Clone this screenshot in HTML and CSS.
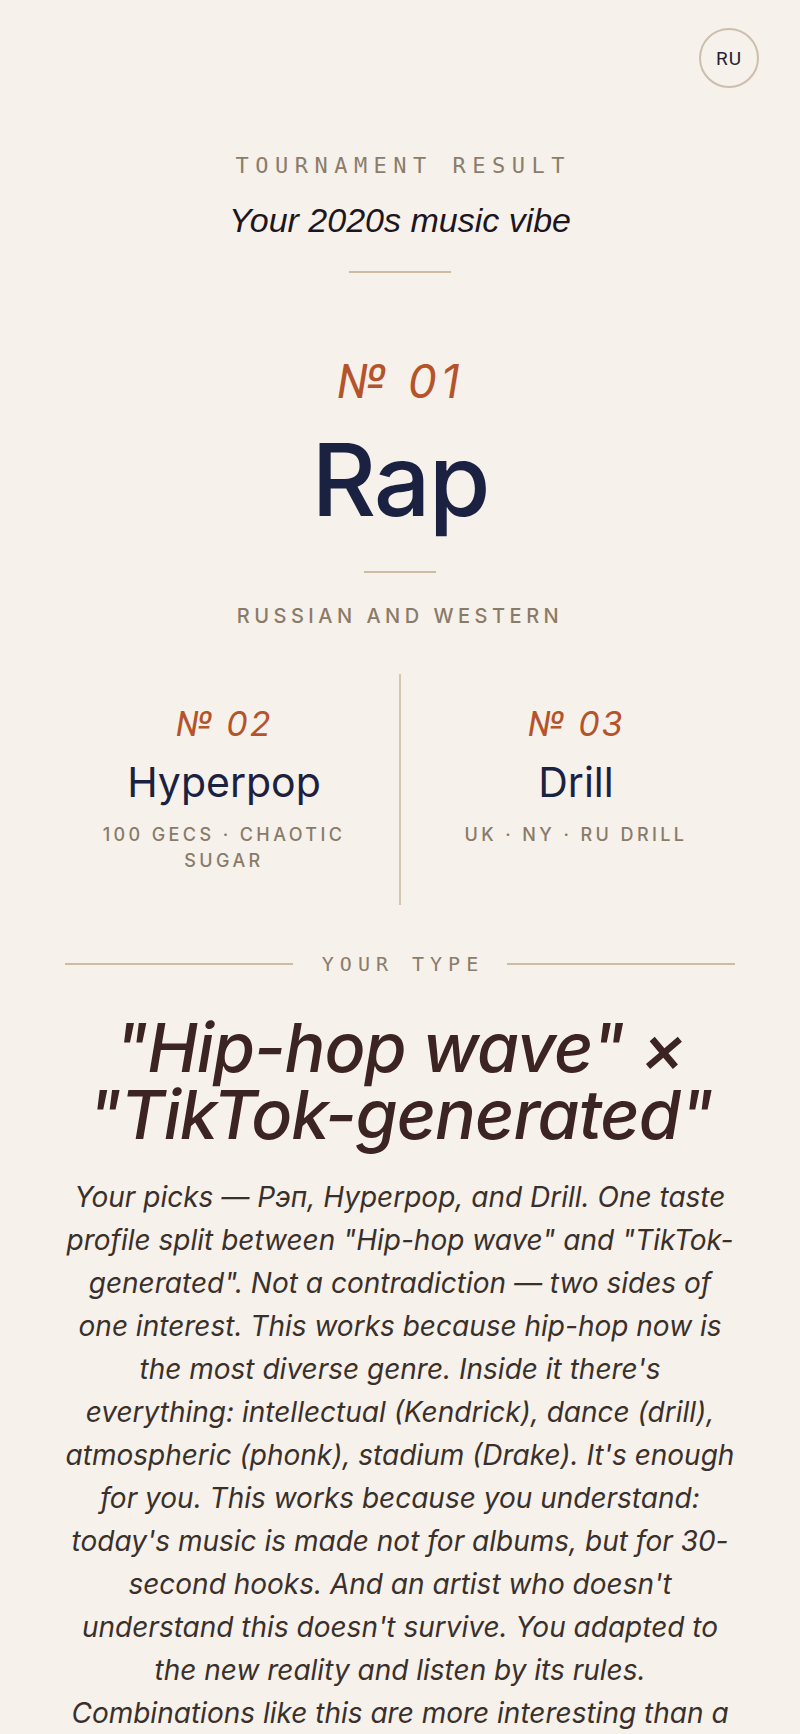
FILE: index.html
```html
<!DOCTYPE html>
<html lang="en">
<head>
    <meta charset="UTF-8">
    <meta name="viewport" content="width=device-width, initial-scale=1.0">
    <title>Tournament result</title>
    <link rel="stylesheet" href="styles.css">
</head>
<body>
    <div class="topbar">
        <button class="lang">RU</button>
    </div>

    <header class="hero">
        <div class="eyebrow">TOURNAMENT RESULT</div>
        <h1 class="subtitle">Your 2020s music vibe</h1>
        <div class="rule"></div>
    </header>

    <section class="winner">
        <div class="num num-big">№ 01</div>
        <h2 class="winner-name">Rap</h2>
        <div class="rule rule-short"></div>
        <div class="tag">RUSSIAN AND WESTERN</div>
    </section>

    <section class="picks">
        <div class="pick">
            <div class="num">№ 02</div>
            <h3 class="pick-name">Hyperpop</h3>
            <div class="tag tag-small">100 GECS · CHAOTIC SUGAR</div>
        </div>
        <div class="picks-sep"></div>
        <div class="pick">
            <div class="num">№ 03</div>
            <h3 class="pick-name">Drill</h3>
            <div class="tag tag-small">UK · NY · RU DRILL</div>
        </div>
    </section>

    <section class="type">
        <div class="type-label">
            <span class="line"></span>
            <span class="label">YOUR TYPE</span>
            <span class="line"></span>
        </div>
        <h2 class="type-title">"Hip-hop wave" × "TikTok-generated"</h2>
        <p class="type-text">Your picks — Рэп, Hyperpop, and Drill. One taste profile split between "Hip-hop wave" and "TikTok-generated". Not a contradiction — two sides of one interest. This works because hip-hop now is the most diverse genre. Inside it there's everything: intellectual (Kendrick), dance (drill), atmospheric (phonk), stadium (Drake). It's enough for you. This works because you understand: today's music is made not for albums, but for 30-second hooks. And an artist who doesn't understand this doesn't survive. You adapted to the new reality and listen by its rules. Combinations like this are more interesting than a single genre — they show how you actually listen.</p>
    </section>
</body>
</html>
```

FILE: styles.css
```css
body { margin: 0; background-color: #f6f1ea; font-family: Inter, "Noto Sans", sans-serif; color: #3a302b; text-align: center; }
h1, h2, h3, p { margin: 0; font-weight: normal; }

.topbar { display: flex; justify-content: flex-end; padding: 28px 41px 0; }
.lang { width: 60px; height: 60px; border-radius: 50%; border: 2px solid #cbbfae; background: transparent; font-family: Roboto, sans-serif; font-size: 19px; font-weight: 400; letter-spacing: 1px; color: #1f2235; padding: 0; }

.hero { display: flex; flex-direction: column; align-items: center; }
.eyebrow { margin-top: 65px; font-family: "DejaVu Sans Mono", monospace; font-size: 22px; line-height: 26px; letter-spacing: 6.5px; margin-right: -6.5px; color: #8b7d6c; }
.subtitle { margin-top: 21px; font-family: "Liberation Sans", Arial, sans-serif; font-style: italic; font-size: 34px; line-height: 40px; color: #1d1620; }
.rule { width: 102px; height: 2px; background-color: #cdbca2; margin-top: 31px; }

.winner { display: flex; flex-direction: column; align-items: center; }
.num { font-style: italic; font-size: 34px; line-height: 40px; color: #b5532b; letter-spacing: 2px; }
.num-big { margin-top: 81px; font-size: 46px; line-height: 54px; letter-spacing: 4px; }
.winner-name { margin-top: 17px; font-size: 100px; line-height: 110px; font-weight: 500; letter-spacing: -2px; color: #1b2140; }
.rule-short { width: 72px; margin-top: 36px; }
.tag { margin-top: 31px; font-size: 20px; line-height: 24px; font-weight: 500; letter-spacing: 4.5px; color: #8a7b69; }

.picks { display: grid; grid-template-columns: 1fr 2px 1fr; column-gap: 16px; margin: 46px 65px 0; }
.picks-sep { background-color: #d3c6b2; height: 231px; }
.pick { padding-top: 30px; }
.pick-name { margin-top: 14px; font-size: 41px; line-height: 48px; font-weight: 400; color: #1b2140; }
.tag-small { margin-top: 16px; font-size: 18px; line-height: 26px; letter-spacing: 3.4px; padding: 0 6px; }

.type { padding: 0 65px 60px; }
.type-label { display: flex; align-items: center; gap: 29px; margin-top: 47px; }
.type-label .line { flex: 1; height: 2px; background-color: #cdbca2; }
.type-label .label { font-family: "DejaVu Sans Mono", monospace; font-size: 20px; line-height: 24px; letter-spacing: 6px; margin-right: -6px; color: #8b7d6c; }
.type-title { margin-top: 38px; font-style: italic; font-size: 68px; line-height: 67px; font-weight: 500; letter-spacing: -1px; color: #3b2422; }
.type-text { margin-top: 28px; font-style: italic; font-size: 28px; line-height: 43px; color: #3a302b; }
```
